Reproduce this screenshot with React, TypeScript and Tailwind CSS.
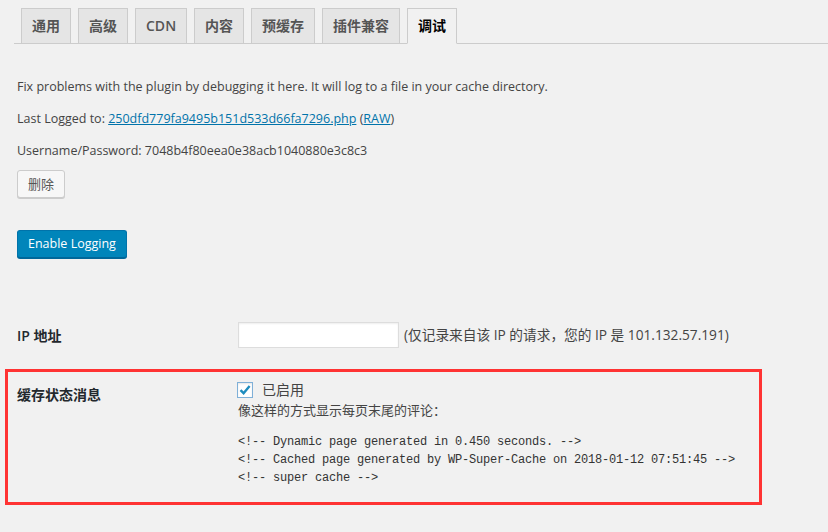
const tabs = ["通用", "高级", "CDN", "内容", "预缓存", "插件兼容", "调试"];

const codeLines = [
  "<!-- Dynamic page generated in 0.450 seconds. -->",
  "<!-- Cached page generated by WP-Super-Cache on 2018-01-12 07:51:45 -->",
  "<!-- super cache -->",
];

export default function App() {
  return (
    <div
      className="min-h-[532px] w-[828px] bg-[#f1f1f1] text-[12.5px] text-[#444]"
      style={{ fontFamily: '"Open Sans", "Noto Sans CJK SC", sans-serif' }}
    >
      {/* tabs */}
      <div className="ml-[14px] flex items-end border-b border-[#ccc] pt-[8px]">
        {tabs.map((t, i) => {
          const active = i === tabs.length - 1;
          return (
            <div
              key={t}
              className={
                active
                  ? "ml-[7px] -mb-px border border-[#ccc] border-b-[#f1f1f1] bg-[#f1f1f1] px-[10px] py-[5px] text-[14px] font-semibold leading-[24px] text-black"
                  : "ml-[7px] border border-b-0 border-[#ccc] bg-[#e5e5e5] px-[10px] py-[5px] text-[14px] font-semibold leading-[24px] text-[#555]"
              }
            >
              {t}
            </div>
          );
        })}
      </div>

      <div className="pl-[17px]">
        <p className="mt-[33px] leading-[19px]">
          Fix problems with the plugin by debugging it here. It will log to a file in your cache directory.
        </p>
        <p className="mt-[13px] leading-[19px]">
          Last Logged to: <span className="text-[#0073aa] underline">250dfd779fa9495b151d533d66fa7296.php</span> (
          <span className="text-[#0073aa] underline">RAW</span>)
        </p>
        <p className="mt-[13px] leading-[19px]">Username/Password: 7048b4f80eea0e38acb1040880e3c8c3</p>

        <button className="mt-[10px] h-[28px] rounded-[3px] border border-[#ccc] bg-[#f7f7f7] px-[10px] text-[13px] leading-[26px] text-[#555] shadow-[0_1px_0_#ccc]">
          删除
        </button>

        <div className="mt-[32px]">
          <button className="h-[28px] rounded-[3px] border border-[#0073aa] border-b-[#006799] bg-[#0085ba] px-[10px] text-[12.5px] leading-[26px] text-white shadow-[0_1px_0_#006799]">
            Enable Logging
          </button>
        </div>

        <div className="mt-[49px] flex items-center py-[15px]">
          <div className="w-[221px] text-[14px] font-semibold text-[#23282d]">IP 地址</div>
          <div className="h-[26px] w-[161px] border border-[#ddd] bg-white shadow-[inset_0_1px_2px_rgba(0,0,0,0.07)]" />
          <span className="ml-[5px] text-[13.7px]">(仅记录来自该 IP 的请求，您的 IP 是 101.132.57.191)</span>
        </div>
      </div>

      {/* highlighted row */}
      <div className="ml-[5px] mt-[6px] w-[757px] border-[3px] border-[#f33] pb-[15px] pl-[9px] pt-[10px]">
        <div className="flex">
          <div className="w-[220px] pt-[2px] text-[14px] font-semibold text-[#23282d]">缓存状态消息</div>
          <div>
            <div className="flex items-center">
              <div className="flex h-[16px] w-[16px] items-center justify-center border border-[#7fb0d8] bg-white shadow-[inset_0_1px_2px_rgba(0,0,0,0.1)]">
                <svg width="14" height="14" viewBox="0 0 14 14">
                  <path d="M2.5 7.2 L5.6 10.2 L11.6 3" fill="none" stroke="#1e8cbe" strokeWidth="2.4" />
                </svg>
              </div>
              <span className="ml-[9px] text-[14px] leading-[14px]">已启用</span>
            </div>
            <div className="mt-[2px] ml-[1px] text-[13px] leading-[20px]">像这样的方式显示每页末尾的评论：</div>
            <div
              className="mt-[13px] ml-[1px] text-[12px] leading-[18px] tracking-[-0.2px] text-[#333]"
              style={{ fontFamily: '"Liberation Mono", monospace' }}
            >
              {codeLines.map((l) => (
                <div key={l} className="whitespace-pre">
                  {l}
                </div>
              ))}
            </div>
          </div>
        </div>
      </div>
    </div>
  );
}
